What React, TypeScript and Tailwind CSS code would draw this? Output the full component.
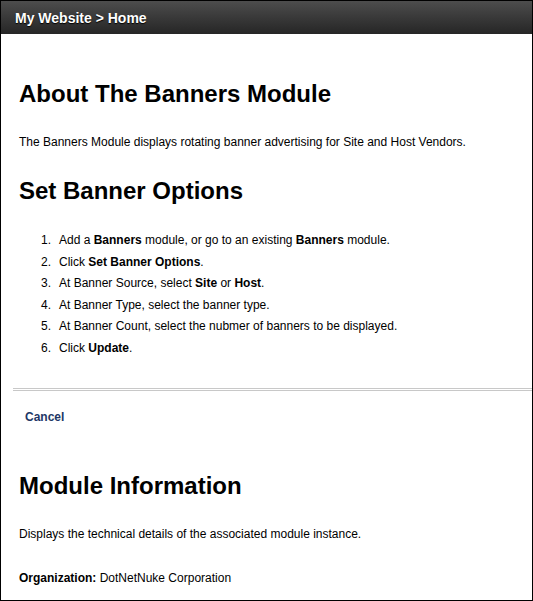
const steps = [
  <>Add a <b>Banners</b> module, or go to an existing <b>Banners</b> module.</>,
  <>Click <b>Set Banner Options</b>.</>,
  <>At Banner Source, select <b>Site</b> or <b>Host</b>.</>,
  <>At Banner Type, select the banner type.</>,
  <>At Banner Count, select the nubmer of banners to be displayed.</>,
  <>Click <b>Update</b>.</>,
];

export default function App() {
  return (
    <div className="w-[533px] h-[601px] border border-black bg-white overflow-hidden text-black font-['Liberation_Sans',Arial,sans-serif]">
      {/* breadcrumb bar */}
      <div className="h-[33px] flex items-center px-[14px] bg-gradient-to-b from-[#4d4d4d] to-[#262626]">
        <span className="text-white font-bold text-[14px] leading-[16px] pt-[1px] [text-shadow:0_1px_1px_#000]">
          My Website &gt; Home
        </span>
      </div>

      <div className="pl-[18px]">
        <h1 className="mt-[46px] text-[24px] leading-[28px] font-bold">About The Banners Module</h1>
        <p className="mt-[25px] text-[12px] leading-[18px]">
          The Banners Module displays rotating banner advertising for Site and Host Vendors.
        </p>

        <h2 className="mt-[26px] text-[24px] leading-[28px] font-bold">Set Banner Options</h2>
        <ol className="mt-[25px] text-[12px]">
          {steps.map((s, i) => (
            <li key={i} className="flex h-[21.6px] leading-[21.6px]">
              <span className="ml-[22px] w-[18px] shrink-0">{i + 1}.</span>
              <span>{s}</span>
            </li>
          ))}
        </ol>
      </div>

      {/* double rule */}
      <div className="ml-[12px] mt-[28px] h-[3px] border-y border-[#c8c8c8]" />

      <div className="pl-[24px] mt-[13px]">
        <a href="#" className="text-[12px] leading-[18px] font-bold text-[#223766]">Cancel</a>
      </div>

      <div className="pl-[18px]">
        <h1 className="mt-[44px] text-[24px] leading-[28px] font-bold">Module Information</h1>
        <p className="mt-[25px] text-[12px] leading-[18px]">
          Displays the technical details of the associated module instance.
        </p>
        <p className="mt-[26px] text-[12px] leading-[18px]">
          <b>Organization:</b> DotNetNuke Corporation
        </p>
      </div>
    </div>
  );
}
